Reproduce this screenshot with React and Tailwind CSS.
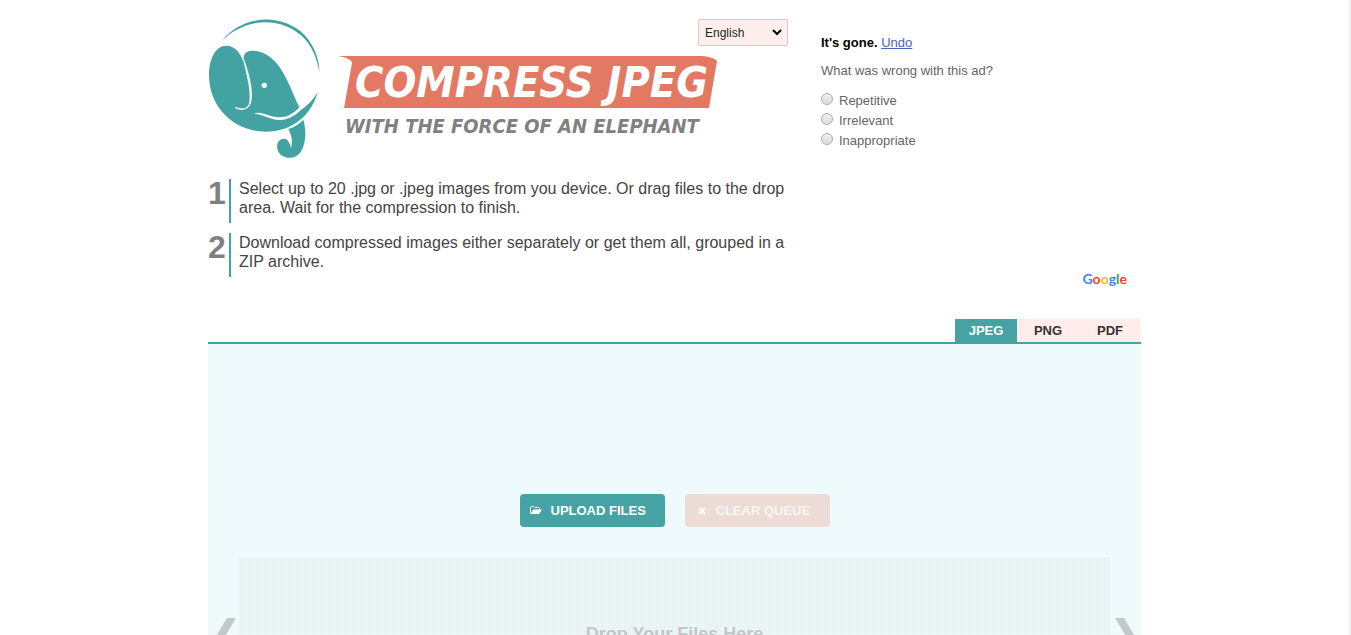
import React, { useState } from "react";

const steps = [
  "Select up to 20 .jpg or .jpeg images from you device. Or drag files to the drop area. Wait for the compression to finish.",
  "Download compressed images either separately or get them all, grouped in a ZIP archive."
];

const reasons = ["Repetitive", "Irrelevant", "Inappropriate"];

const tabs = ["JPEG", "PNG", "PDF"];

const App = () => {
  const [activeTab, setActiveTab] = useState("JPEG");

  return (
    <div className="h-screen overflow-hidden border-r-2 border-[#f1f1f1] bg-white font-['Liberation_Sans',Arial,sans-serif] text-[#444]">
      <div className="mx-auto max-w-[933px]">
        <header className="flex justify-between">
          <div className="w-[580px] pt-[19px] pb-3">
            <Brand />
            <ol className="mt-5 flex flex-col gap-[10px]">
              {steps.map((text, i) => (
                <li key={text} className="flex">
                  <span className="w-[21px] text-[32px] leading-[28px] font-bold text-[#808080]">
                    {i + 1}
                  </span>
                  <p className="min-h-11 flex-1 border-l-2 border-[#45a3a3] pl-2 text-base leading-[19px]">
                    {text}
                  </p>
                </li>
              ))}
            </ol>
          </div>
          <AdFeedback />
        </header>

        {/* Format tabs */}
        <nav className="mt-[30px] flex justify-end border-b-2 border-[#45a3a3]">
          {tabs.map((tab) => (
            <a
              key={tab}
              href={`#${tab.toLowerCase()}`}
              onClick={() => setActiveTab(tab)}
              className={`w-[62px] text-center text-[13px] leading-[23px] font-bold ${
                tab === activeTab ? "bg-[#45a3a3] text-white" : "bg-[#ffedeb] text-[#333]"
              }`}
            >
              {tab}
            </a>
          ))}
        </nav>

        <main className="bg-[#effafc] pt-[150px]">
          <div className="flex justify-center gap-5">
            <button className="flex h-[33px] w-[145px] items-center rounded-sm bg-[#45a3a3] pl-[10px] text-[13px] font-bold text-white">
              <svg viewBox="0 0 24 17" className="mr-[9px] w-3">
                <path d="M1 15V3L3 1H8L10 3H17L19 5V7" fill="none" stroke="#fff" strokeWidth="2" />
                <path d="M7 7H24L18 16H1Z" fill="#fff" />
              </svg>
              UPLOAD FILES
            </button>
            <button
              disabled
              className="flex h-[33px] w-[145px] items-center rounded-sm bg-[#eddbd6] pl-[13px] text-[13px] font-bold text-[#f8f5f4]"
            >
              <svg viewBox="0 0 8 8" className="mr-[10px] w-2">
                <path d="M1 1L7 7M7 1L1 7" stroke="#fff" strokeWidth="2" />
              </svg>
              CLEAR QUEUE
            </button>
          </div>

          {/* Drop area */}
          <div className="mt-[30px] flex items-start">
            <Arrow label="Previous" points="19,0 28,0 16,20 28,40 19,40 7,20" />
            <div className="h-[170px] flex-1 bg-[#ebf5f6] bg-[radial-gradient(#e8f2f4_1px,transparent_1px)] bg-[size:4px_4px] pt-[67px] text-center text-lg leading-5 font-bold text-[#c3c7c8]">
              Drop Your Files Here
            </div>
            <Arrow label="Next" points="5,0 14,0 26,20 14,40 5,40 17,20" />
          </div>
        </main>
      </div>
    </div>
  );
};

const Brand = () => (
  <div className="flex justify-between">
    <Elephant />
    <div className="w-[450px]">
      <div className="relative ml-auto w-[90px]">
        <select
          aria-label="Language"
          className="block h-[27px] w-full appearance-none rounded-xs border border-[#ccc] bg-[#ffefec] pl-[6px] text-xs text-[#222]"
        >
          <option>English</option>
        </select>
        <svg viewBox="0 0 10 7" className="pointer-events-none absolute top-[10px] right-[6px] w-[10px]">
          <path d="M1 1l4 4 4-4" fill="none" stroke="#000" strokeWidth="2" />
        </svg>
      </div>
      <div className="mt-[10px] w-[380px] font-['DejaVu_Sans_Condensed','DejaVu_Sans',sans-serif] font-bold italic">
        <h1 className="relative h-[52px] pl-[17px] text-[43px] leading-[52px] whitespace-nowrap text-white">
          <svg viewBox="0 0 380 52" className="absolute inset-0 size-full">
            <path d="M0 0H360C369 0 377 2 379 5L371 52H6L14 7C13 3 7 1 0 0Z" fill="#e37962" />
          </svg>
          <span className="relative">COMPRESS JPEG</span>
        </h1>
        <p className="mt-1 pl-[7px] text-[20px] leading-[28px] whitespace-nowrap text-[#808080]">
          WITH THE FORCE OF AN ELEPHANT
        </p>
      </div>
    </div>
  </div>
);

const Elephant = () => (
  <svg viewBox="24 27 339 420" className="h-[140px] w-[113px]" fill="#42a3a2">
    <path d="M65 92C130 14 245 8 313 74C343 107 358 147 358 186C351 144 335 106 308 80C243 20 142 20 65 92Z" />
    <path d="M78 107C105 107 120 127 131 157C128 132 137 122 159 122C191 123 219 143 238 170C264 208 278 250 298 292L298 303C322 287 340 270 353 245C336 315 276 365 197 365C101 365 27 291 27 196C27 143 49 107 78 107Z" />
    <path d="M265 357C286 350 299 340 310 329C319 360 319 400 302 426C287 450 246 449 234 423C226 402 236 386 253 386C263 387 269 397 273 414C278 395 276 376 265 357Z" />
    <path d="M106 292C112 300 134 301 144 292C166 271 151 200 130 146C140 192 154 240 149 275C146 298 127 300 106 292Z" fill="#fff" stroke="#fff" strokeWidth="2" />
    <path d="M162 312C185 300 204 323 240 322C265 322 285 306 299 291L302 301C284 318 264 330 240 330C206 330 190 311 162 312Z" fill="#fff" />
    <circle cx="193" cy="226" r="8" fill="#fff" />
  </svg>
);

const AdFeedback = () => (
  <form className="flex w-[336px] flex-col pt-[33px] pr-[14px] pl-4 text-[13px] leading-5 text-[#666]">
    <p>
      <b className="text-black">It's gone.</b>{" "}
      <a href="#undo" className="text-[#4663c0] underline">
        Undo
      </a>
    </p>
    <fieldset className="mt-2">
      <legend className="mb-[10px]">What was wrong with this ad?</legend>
      {reasons.map((reason) => (
        <label key={reason} className="flex items-start gap-[6px]">
          <input
            type="radio"
            name="reason"
            className="mt-[2px] size-3 appearance-none rounded-full border border-[#aaa] bg-linear-to-b from-[#eee] to-[#ddd] checked:bg-[#777]"
          />
          {reason}
        </label>
      ))}
    </fieldset>
    <div className="mt-auto text-right font-['Lato',sans-serif] text-sm leading-5 font-bold text-[#4285f4]">
      G<span className="text-[#ea4335]">o</span>
      <span className="text-[#fbbc05]">o</span>g
      <span className="text-[#34a853]">l</span>
      <span className="text-[#ea4335]">e</span>
    </div>
  </form>
);

const Arrow = ({ label, points }) => (
  <button aria-label={label} className="w-[31px] pt-[61px]">
    <svg viewBox="0 0 31 40" className="w-[31px]" fill="#c3c9cb">
      <polygon points={points} />
    </svg>
  </button>
);

export default App;
